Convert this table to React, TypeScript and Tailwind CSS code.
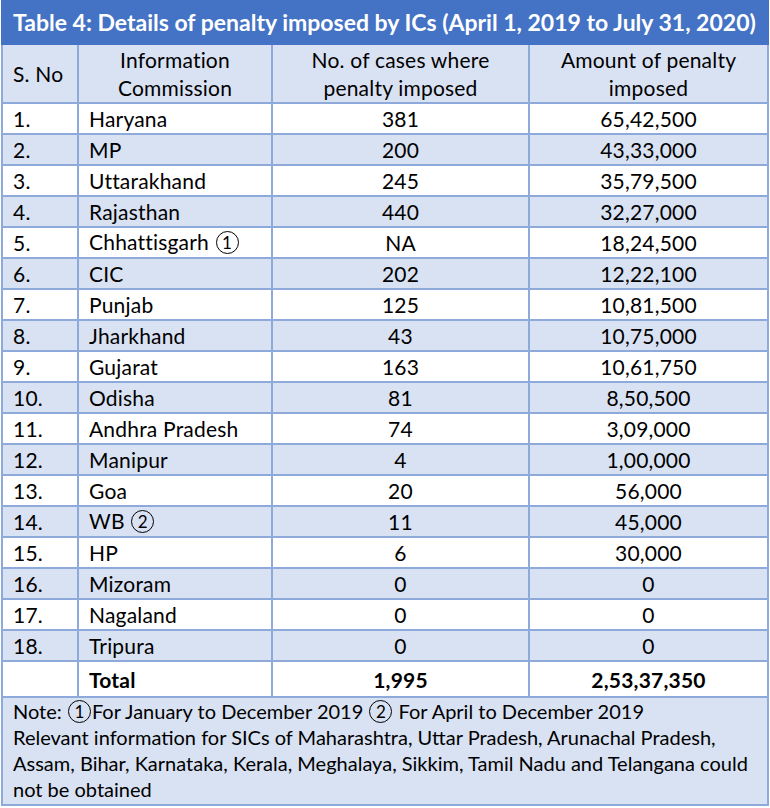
import React from "react";

const rows: [string, string, string | null, string, string][] = [
  ["1.", "Haryana", null, "381", "65,42,500"],
  ["2.", "MP", null, "200", "43,33,000"],
  ["3.", "Uttarakhand", null, "245", "35,79,500"],
  ["4.", "Rajasthan", null, "440", "32,27,000"],
  ["5.", "Chhattisgarh", "1", "NA", "18,24,500"],
  ["6.", "CIC", null, "202", "12,22,100"],
  ["7.", "Punjab", null, "125", "10,81,500"],
  ["8.", "Jharkhand", null, "43", "10,75,000"],
  ["9.", "Gujarat", null, "163", "10,61,750"],
  ["10.", "Odisha", null, "81", "8,50,500"],
  ["11.", "Andhra Pradesh", null, "74", "3,09,000"],
  ["12.", "Manipur", null, "4", "1,00,000"],
  ["13.", "Goa", null, "20", "56,000"],
  ["14.", "WB", "2", "11", "45,000"],
  ["15.", "HP", null, "6", "30,000"],
  ["16.", "Mizoram", null, "0", "0"],
  ["17.", "Nagaland", null, "0", "0"],
  ["18.", "Tripura", null, "0", "0"],
];

const Circle = ({ n }: { n: string }) => (
  <span className="inline-flex items-center justify-center w-[23px] h-[23px] rounded-full border-[1.5px] border-black text-[17px] leading-none align-[1px] mx-[1px]">
    {n}
  </span>
);

const cell = "border-2 border-[#8eaadb] px-[10px]";

export default function App() {
  return (
    <div className="w-[770px] h-[808px] bg-white pl-[1px] font-['Lato','Open_Sans',sans-serif] text-black">
      <table className="border-collapse table-fixed w-[766px] text-[21px] leading-none tracking-[0.2px]">
        <colgroup>
          <col className="w-[76px]" />
          <col className="w-[194px]" />
          <col className="w-[257px]" />
          <col className="w-[239px]" />
        </colgroup>
        <thead>
          <tr className="h-[43px] bg-[#4472c4]">
            <th colSpan={4} className="border-2 border-[#4472c4] text-left pl-[10px] text-white text-[23px] font-bold tracking-normal">
              Table 4: Details of penalty imposed by ICs (April 1, 2019 to July 31, 2020)
            </th>
          </tr>
          <tr className="h-[59px] bg-[#d9e2f3]">
            <th className={`${cell} text-left font-normal`}>S. No</th>
            <th className={`${cell} font-normal leading-[28px]`}>
              Information
              <br />
              Commission
            </th>
            <th className={`${cell} font-normal leading-[28px]`}>
              No. of cases where
              <br />
              penalty imposed
            </th>
            <th className={`${cell} font-normal leading-[28px]`}>
              Amount of penalty
              <br />
              imposed
            </th>
          </tr>
        </thead>
        <tbody>
          {rows.map(([no, name, mark, cases, amt], i) => (
            <tr key={no} className={`h-[31px] ${i % 2 === 1 ? "bg-[#d9e2f3]" : "bg-white"}`}>
              <td className={cell}>{no}</td>
              <td className={cell}>
                {name}
                {mark && (
                  <>
                    {" "}
                    <Circle n={mark} />
                  </>
                )}
              </td>
              <td className={`${cell} text-center`}>{cases}</td>
              <td className={`${cell} text-center`}>{amt}</td>
            </tr>
          ))}
          <tr className="h-[36px] bg-white font-bold">
            <td className={cell}></td>
            <td className={cell}>Total</td>
            <td className={`${cell} text-center`}>1,995</td>
            <td className={`${cell} text-center`}>2,53,37,350</td>
          </tr>
          <tr className="bg-[#d9e2f3]">
            <td colSpan={4} className="border-2 border-[#8eaadb] px-[10px] pt-0 pb-[2px] text-[20px] tracking-normal leading-[26px]">
              Note: <Circle n="1" />For January to December 2019 <Circle n="2" /> For April to December 2019
              <br />
              Relevant information for SICs of Maharashtra, Uttar Pradesh, Arunachal Pradesh, Assam, Bihar, Karnataka, Kerala, Meghalaya, Sikkim, Tamil Nadu and Telangana could not be obtained
            </td>
          </tr>
        </tbody>
      </table>
    </div>
  );
}
